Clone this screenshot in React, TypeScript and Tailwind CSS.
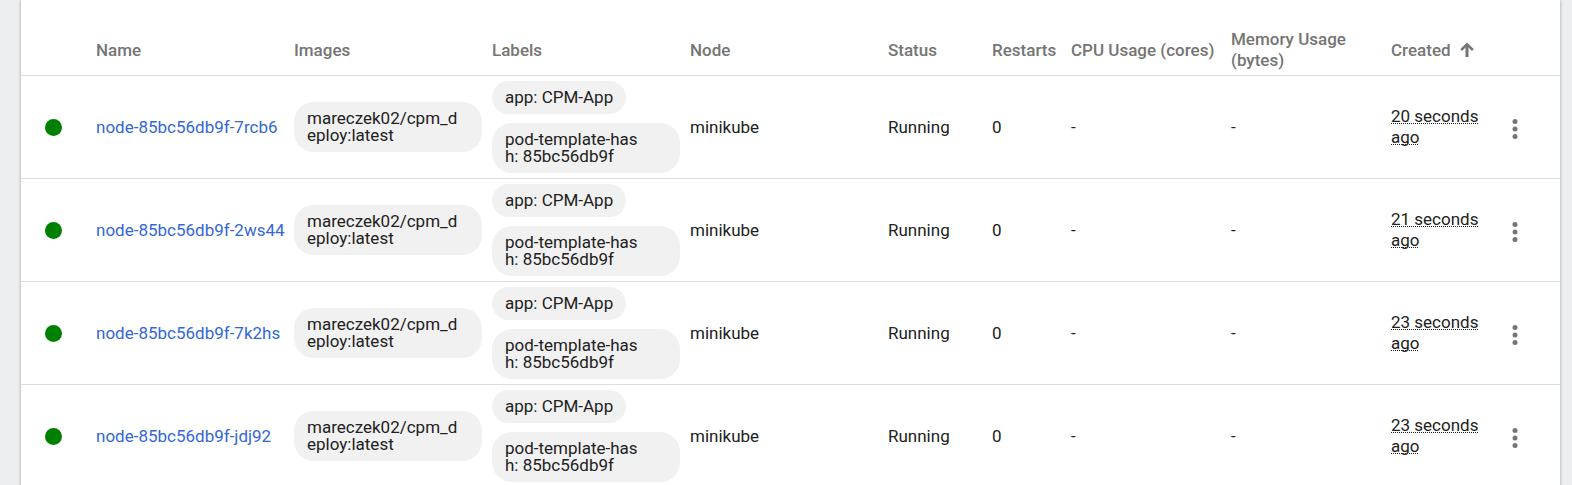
import React from "react";

type Pod = { name: string; created: string };

const pods: Pod[] = [
  { name: "node-85bc56db9f-7rcb6", created: "20 seconds ago" },
  { name: "node-85bc56db9f-2ws44", created: "21 seconds ago" },
  { name: "node-85bc56db9f-7k2hs", created: "23 seconds ago" },
  { name: "node-85bc56db9f-jdj92", created: "23 seconds ago" },
];

function Chip({ children }: { children: React.ReactNode }) {
  return (
    <span className="max-w-full rounded-[20px] bg-[#f1f1f1] px-[13px] py-2 leading-[17px] break-all">
      {children}
    </span>
  );
}

function SortArrow() {
  return (
    <svg className="h-4 w-4" viewBox="0 0 16 16" fill="none" stroke="currentColor" aria-hidden="true">
      <path d="M8 15V2.5" strokeWidth="3" />
      <path d="M2.2 8L8 2.2l5.8 5.8" strokeWidth="2.5" />
    </svg>
  );
}

function MoreIcon() {
  return (
    <svg className="h-[30px] w-[30px]" viewBox="0 0 24 24" fill="currentColor" aria-hidden="true">
      <circle cx="12" cy="6" r="2" />
      <circle cx="12" cy="12" r="2" />
      <circle cx="12" cy="18" r="2" />
    </svg>
  );
}

const head = "border-b border-[#dedede] p-0 text-left align-middle font-medium";
const cell = "border-b border-[#dedede] p-0 align-middle";

function PodRow({ pod }: { pod: Pod }) {
  return (
    <tr>
      <td className={cell}>
        <span role="img" aria-label="Running" className="ml-6 block h-[17px] w-[17px] rounded-full bg-[#008000]" />
      </td>
      <td className={`${cell} whitespace-nowrap`}>
        <a href="#" className="text-[#3367d6]">{pod.name}</a>
      </td>
      <td className={`${cell} pr-[10px]`}>
        <div className="flex flex-col">
          <Chip>
            mareczek02/cpm_d
            <br />
            eploy:latest
          </Chip>
        </div>
      </td>
      <td className={`${cell} pr-[10px]`}>
        <div className="flex flex-col items-start gap-[9px] py-[5px]">
          <Chip>app: CPM-App</Chip>
          <div className="flex w-full flex-col">
            <Chip>
              pod-template-has
              <br />
              h: 85bc56db9f
            </Chip>
          </div>
        </div>
      </td>
      <td className={cell}>minikube</td>
      <td className={cell}>Running</td>
      <td className={cell}>0</td>
      <td className={cell}>-</td>
      <td className={cell}>-</td>
      <td className={cell}>
        <span className="underline decoration-dotted decoration-1">{pod.created}</span>
      </td>
      <td className={cell}>
        <button type="button" aria-label={`Actions for ${pod.name}`} className="mt-[3px] block text-[#757575]">
          <MoreIcon />
        </button>
      </td>
    </tr>
  );
}

export default function App() {
  return (
    <div className="min-h-screen overflow-hidden bg-[#edeef0] pr-3 pl-[21px] font-[Roboto,sans-serif] text-[17px] leading-[21px] text-[#212121]">
      <main className="min-h-screen bg-white pt-[25px] shadow-[0_0_3px_rgba(0,0,0,0.35)]">
        <table className="w-full table-fixed border-separate border-spacing-0">
          <colgroup>
            <col className="w-[75px]" />
            <col />
            <col />
            <col />
            <col />
            <col className="w-[104px]" />
            <col className="w-[79px]" />
            <col className="w-[160px]" />
            <col className="w-[160px]" />
            <col className="w-[109px]" />
            <col className="w-[60px]" />
          </colgroup>
          <thead className="text-[#757575]">
            <tr className="h-[51px]">
              <td className={head} />
              <th className={head}>Name</th>
              <th className={head}>Images</th>
              <th className={head}>Labels</th>
              <th className={head}>Node</th>
              <th className={head}>Status</th>
              <th className={head}>Restarts</th>
              <th className={head}>CPU Usage (cores)</th>
              <th className={`${head} pr-6`}>Memory Usage (bytes)</th>
              <th className={head} aria-sort="ascending">
                <button type="button" className="flex items-center gap-2">
                  Created
                  <SortArrow />
                </button>
              </th>
              <td className={head} />
            </tr>
          </thead>
          <tbody>
            {pods.map((pod) => (
              <PodRow key={pod.name} pod={pod} />
            ))}
          </tbody>
        </table>
      </main>
    </div>
  );
}
